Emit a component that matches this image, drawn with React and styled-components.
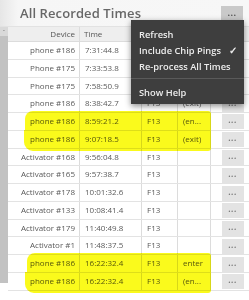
import React from "react";
import styled, { createGlobalStyle } from "styled-components";

const rows = [
  { device: "phone #186", time: "7:31:44.8", code: "", event: "" },
  { device: "Phone #175", time: "7:33:53.8", code: "", event: "" },
  { device: "Phone #175", time: "7:58:50.9", code: "", event: "" },
  { device: "phone #186", time: "8:38:42.7", code: "F13", event: "(exit)" },
  { device: "phone #186", time: "8:59:21.2", code: "F13", event: "(en...", mark: "top", inset: 17 },
  { device: "phone #186", time: "9:07:18.5", code: "F13", event: "(exit)", mark: "bottom", inset: 16 },
  { device: "Activator #168", time: "9:56:04.8", code: "F13", event: "" },
  { device: "Activator #165", time: "9:57:38.7", code: "F13", event: "" },
  { device: "Activator #178", time: "10:01:32.6", code: "F13", event: "" },
  { device: "Activator #133", time: "10:08:41.4", code: "F13", event: "" },
  { device: "Activator #179", time: "11:40:49.8", code: "F13", event: "" },
  { device: "Activator #1", time: "11:48:37.5", code: "F13", event: "" },
  { device: "phone #186", time: "16:22:32.4", code: "F13", event: "enter", mark: "top", inset: 19 },
  { device: "phone #186", time: "16:22:32.4", code: "F13", event: "(en...", mark: "bottom", inset: 17 },
];

const menuItems = [
  { label: "Refresh" },
  { label: "Include Chip Pings", checked: true },
  { label: "Re-process All Times", divider: true },
  { label: "Show Help" },
];

const GlobalStyle = createGlobalStyle`
  body {
    margin: 0;
    background: #fff;
    font-family: "Open Sans", "Liberation Sans", sans-serif;
  }
`;

const Panel = styled.div`
  position: relative;
  width: 249px;
  height: 300px;
  overflow: hidden;
  background: #fff;
`;

const TitleBar = styled.div`
  height: 27px;
  display: flex;
  align-items: center;
  padding: 0 6px 0 20px;
  background: linear-gradient(90deg, #e6e6e6 0px, #f6f6f6 18px, #f7f7f7 100%);
  border-bottom: 1px solid #e2e2e2;
  box-sizing: border-box;
`;

const Title = styled.div`
  flex: 1;
  font-size: 13px;
  font-weight: 600;
  color: #676767;
  letter-spacing: 0.1px;
`;

const DotsButton = styled.div`
  display: flex;
  align-items: center;
  justify-content: center;
  width: 22px;
  height: 15px;
  margin-top: 1px;
  background: ${(p) => (p.$active ? "#c9c9c9" : "#e4e4e4")};
  color: #555;
  font-size: 9px;
  font-weight: 700;
  line-height: 1;
  letter-spacing: 0.5px;
  padding-bottom: 3px;
  box-sizing: border-box;
`;

const Body = styled.div`
  display: flex;
`;

const LeftStrip = styled.div`
  width: 8px;
  display: flex;
  flex-direction: column;
`;

const StripTop = styled.div`
  height: 9px;
  background: #d9d9d9;
  color: #777;
  font-size: 7px;
  line-height: 5px;
  text-align: center;
`;

const StripThumb = styled.div`
  height: 247px;
  background: #c2c2c2;
`;

const Table = styled.div`
  flex: 1;
  display: flex;
  flex-direction: column;
`;

const cols = "72px 62px 36px 33px 1fr";

const HeaderRow = styled.div`
  display: grid;
  grid-template-columns: ${cols};
  height: 15px;
  background: #eeeeee;
  border-bottom: 1px solid #dcdcdc;
  box-sizing: border-box;
`;

const HeadCell = styled.div`
  font-size: 8px;
  color: #555;
  line-height: 14px;
  padding: 0 4px;
  text-align: ${(p) => (p.$right ? "right" : "left")};
  border-right: ${(p) => (p.$last ? "none" : "1px solid #dcdcdc")};
`;

const Row = styled.div`
  position: relative;
  display: grid;
  grid-template-columns: ${cols};
  height: 17.77px;
  border-bottom: 1px solid #e3e3e3;
  box-sizing: border-box;

  &::before {
    content: "";
    display: ${(p) => (p.$mark ? "block" : "none")};
    position: absolute;
    left: ${(p) => p.$inset || 0}px;
    right: 38px;
    top: ${(p) => (p.$mark === "top" ? "-2px" : "-1px")};
    bottom: ${(p) => (p.$mark === "bottom" ? "-3px" : "0")};
    background: #fafa1c;
    border-radius: ${(p) =>
      p.$mark === "top" ? "8px 3px 0 0" : "0 0 3px 9px"};
    mix-blend-mode: multiply;
    z-index: 1;
  }
`;

const Cell = styled.div`
  font-size: 8px;
  color: #5a5a5a;
  line-height: 16.5px;
  padding: 0 4px 0 5px;
  white-space: nowrap;
  overflow: hidden;
  text-align: ${(p) => (p.$right ? "right" : "left")};
  border-right: 1px solid #dcdcdc;
`;

const ActionCell = styled.div`
  display: flex;
  align-items: center;
  justify-content: center;
  padding-left: 5px;
`;

const RowButton = styled(DotsButton)`
  height: 15px;
  width: 22px;
  font-size: 8px;
  color: #777;
  background: #e3e3e3;
`;

const Menu = styled.div`
  position: absolute;
  left: 131px;
  top: 20px;
  width: 113px;
  padding: 6px 0 4px;
  background: #3e3e3e;
  box-shadow: 0 2px 6px rgba(0, 0, 0, 0.45);
  z-index: 5;
`;

const MenuItem = styled.div`
  display: flex;
  align-items: center;
  height: 16px;
  padding: 0 8px;
  font-size: 9.3px;
  font-weight: 600;
  color: #ececec;
  white-space: nowrap;
`;

const MenuLabel = styled.span`
  flex: 1;
`;

const Check = styled.span`
  font-size: 10px;
  color: #ececec;
  margin-right: -1px;
`;

const MenuDivider = styled.div`
  height: 1px;
  margin: 4px 0 5px;
  background: #5a5a5a;
`;

export default function App() {
  return (
    <>
      <GlobalStyle />
      <Panel>
        <TitleBar>
          <Title>All Recorded Times</Title>
          <DotsButton $active>...</DotsButton>
        </TitleBar>
        <Body>
          <LeftStrip>
            <StripTop>-</StripTop>
            <StripThumb />
          </LeftStrip>
          <Table>
            <HeaderRow>
              <HeadCell $right>Device</HeadCell>
              <HeadCell>Time</HeadCell>
              <HeadCell />
              <HeadCell />
              <HeadCell $last />
            </HeaderRow>
            {rows.map((r, i) => (
              <Row key={i} $mark={r.mark} $inset={r.inset}>
                <Cell $right>{r.device}</Cell>
                <Cell>{r.time}</Cell>
                <Cell>{r.code}</Cell>
                <Cell>{r.event}</Cell>
                <ActionCell>
                  <RowButton>...</RowButton>
                </ActionCell>
              </Row>
            ))}
          </Table>
        </Body>
        <Menu>
          {menuItems.map((m) => (
            <React.Fragment key={m.label}>
              <MenuItem>
                <MenuLabel>{m.label}</MenuLabel>
                {m.checked && <Check>✓</Check>}
              </MenuItem>
              {m.divider && <MenuDivider />}
            </React.Fragment>
          ))}
        </Menu>
      </Panel>
    </>
  );
}
